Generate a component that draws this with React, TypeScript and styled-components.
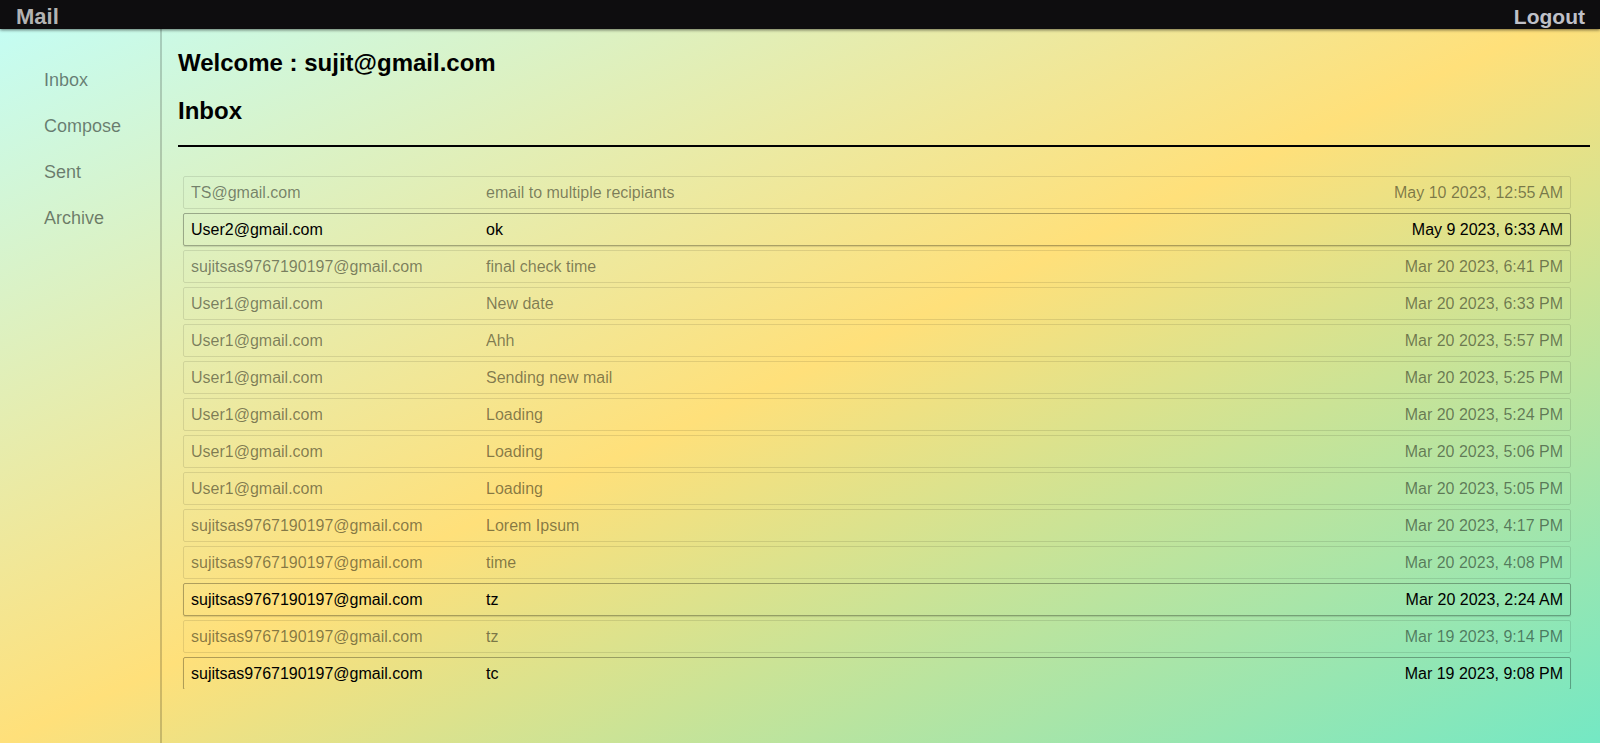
import React from "react";
import styled, { createGlobalStyle } from "styled-components";

const Global = createGlobalStyle`
  html, body { margin: 0; padding: 0; height: 100%; }
  body {
    font-family: "Liberation Sans", Arial, sans-serif;
    background: linear-gradient(to bottom right, #c2fef8 0%, #ffe07a 50%, #74e8c4 100%);
    background-attachment: fixed;
    min-height: 743px;
    overflow: hidden;
  }
`;

const Page = styled.div`
  height: 743px;
  display: flex;
  flex-direction: column;
`;

const Header = styled.header`
  height: 29px;
  flex: none;
  background: #0e0d0f;
  box-shadow: 0 1px 3px rgba(0, 0, 0, 0.55);
  display: flex;
  align-items: center;
  justify-content: space-between;
  padding: 4px 15px 0 16px;
  box-sizing: border-box;
  position: relative;
  z-index: 1;
`;

const Brand = styled.span`
  font-size: 22px;
  font-weight: bold;
  color: #b3b3b3;
`;

const LogoutLink = styled.span`
  font-size: 21px;
  font-weight: bold;
  color: #bfc0c8;
`;

const Body = styled.div`
  flex: 1;
  display: flex;
  min-height: 0;
`;

const Sidebar = styled.nav`
  width: 162px;
  flex: none;
  border-right: 2px solid rgba(0, 0, 0, 0.18);
  display: flex;
  flex-direction: column;
  gap: 25px;
  padding: 41px 0 0 44px;
  box-sizing: border-box;
`;

const NavLink = styled.span`
  font-size: 18px;
  line-height: 21px;
  color: rgba(0, 0, 0, 0.5);
`;

const Main = styled.main`
  flex: 1;
  display: flex;
  flex-direction: column;
  padding: 0 10px 0 16px;
  min-width: 0;
`;

const Title = styled.h2`
  margin: 20px 0 0;
  font-size: 24px;
  line-height: 28px;
  font-weight: bold;
  color: #000;
`;

const Rule = styled.div`
  margin-top: 20px;
  height: 2px;
  background: #000;
`;

const List = styled.div`
  margin-top: 24px;
  height: 518px;
  overflow: hidden;
  padding: 5px 19px 0 5px;
  box-sizing: border-box;
  display: flex;
  flex-direction: column;
  gap: 4px;
`;

const Row = styled.div<{ $unread: boolean }>`
  flex: none;
  height: 33px;
  box-sizing: border-box;
  display: grid;
  grid-template-columns: 295px 1fr auto;
  align-items: center;
  padding: 0 7px 0 7px;
  font-size: 16px;
  border-radius: 2px;
  color: ${(p) => (p.$unread ? "#000" : "rgba(0, 0, 0, 0.48)")};
  border: 1px solid ${(p) => (p.$unread ? "rgba(0,0,0,0.3)" : "rgba(0,0,0,0.1)")};
  box-shadow: ${(p) => (p.$unread ? "0 1px 1px rgba(0,0,0,0.12)" : "none")};
`;

const Cell = styled.span<{ $right?: boolean }>`
  white-space: nowrap;
  text-align: ${(p) => (p.$right ? "right" : "left")};
`;

const mails = [
  { from: "TS@gmail.com", subject: "email to multiple recipiants", date: "May 10 2023, 12:55 AM", unread: false },
  { from: "User2@gmail.com", subject: "ok", date: "May 9 2023, 6:33 AM", unread: true },
  { from: "sujitsas9767190197@gmail.com", subject: "final check time", date: "Mar 20 2023, 6:41 PM", unread: false },
  { from: "User1@gmail.com", subject: "New date", date: "Mar 20 2023, 6:33 PM", unread: false },
  { from: "User1@gmail.com", subject: "Ahh", date: "Mar 20 2023, 5:57 PM", unread: false },
  { from: "User1@gmail.com", subject: "Sending new mail", date: "Mar 20 2023, 5:25 PM", unread: false },
  { from: "User1@gmail.com", subject: "Loading", date: "Mar 20 2023, 5:24 PM", unread: false },
  { from: "User1@gmail.com", subject: "Loading", date: "Mar 20 2023, 5:06 PM", unread: false },
  { from: "User1@gmail.com", subject: "Loading", date: "Mar 20 2023, 5:05 PM", unread: false },
  { from: "sujitsas9767190197@gmail.com", subject: "Lorem Ipsum", date: "Mar 20 2023, 4:17 PM", unread: false },
  { from: "sujitsas9767190197@gmail.com", subject: "time", date: "Mar 20 2023, 4:08 PM", unread: false },
  { from: "sujitsas9767190197@gmail.com", subject: "tz", date: "Mar 20 2023, 2:24 AM", unread: true },
  { from: "sujitsas9767190197@gmail.com", subject: "tz", date: "Mar 19 2023, 9:14 PM", unread: false },
  { from: "sujitsas9767190197@gmail.com", subject: "tc", date: "Mar 19 2023, 9:08 PM", unread: true },
];

export default function App() {
  return (
    <Page>
      <Global />
      <Header>
        <Brand>Mail</Brand>
        <LogoutLink>Logout</LogoutLink>
      </Header>
      <Body>
        <Sidebar>
          <NavLink>Inbox</NavLink>
          <NavLink>Compose</NavLink>
          <NavLink>Sent</NavLink>
          <NavLink>Archive</NavLink>
        </Sidebar>
        <Main>
          <Title>Welcome : sujit@gmail.com</Title>
          <Title>Inbox</Title>
          <Rule />
          <List>
            {mails.map((m, i) => (
              <Row key={i} $unread={m.unread}>
                <Cell>{m.from}</Cell>
                <Cell>{m.subject}</Cell>
                <Cell $right>{m.date}</Cell>
              </Row>
            ))}
          </List>
        </Main>
      </Body>
    </Page>
  );
}
